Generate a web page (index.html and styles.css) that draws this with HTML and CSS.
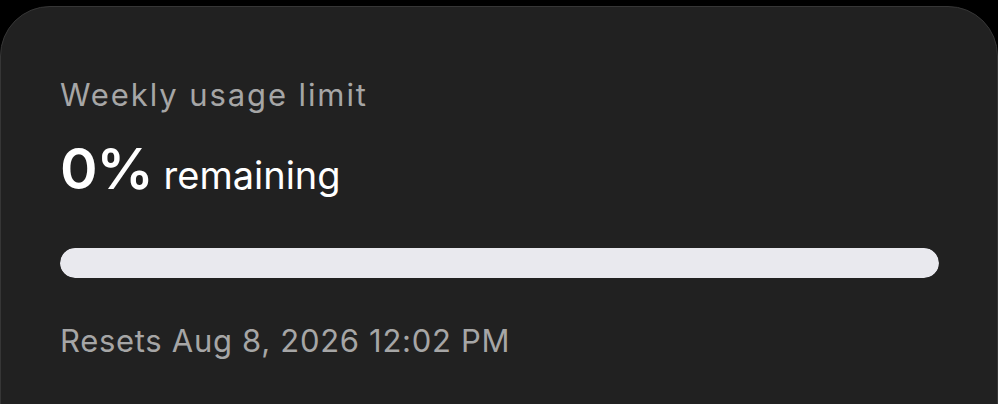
FILE: index.html
```html
<!DOCTYPE html>
<html lang="en">
  <head>
    <meta charset="UTF-8" />
    <meta name="viewport" content="width=device-width, initial-scale=1.0" />
    <title>Usage</title>
    <link rel="stylesheet" href="styles.css">
  </head>
  <body>
    <section class="card">
      <h3 class="label">Weekly usage limit</h3>
      <p class="amount"><strong>0%</strong> remaining</p>
      <div class="bar"><div class="fill" style="width: 100%"></div></div>
      <p class="reset">Resets Aug 8, 2026 12:02 PM</p>
    </section>
  </body>
</html>
```

FILE: styles.css
```css
html,
body {
  margin: 0;
  height: 100%;
  background-color: #000;
  overflow: hidden;
}

body {
  font-family: Inter, "Noto Sans", sans-serif;
  padding-top: 6px;
}

.card {
  box-sizing: border-box;
  height: 440px;
  background-color: #212121;
  border: 1px solid #363636;
  border-radius: 50px 50px 0 0;
  padding: 70px 58px 0 59px;
}

.label {
  margin: 0;
  font-size: 31px;
  font-weight: 400;
  line-height: 36px;
  letter-spacing: 1.9px;
  color: #a6a6a6;
}

.amount {
  margin: 26px 0 0;
  font-size: 38px;
  line-height: 60px;
  color: #fff;
}

.amount strong {
  font-size: 57px;
  font-weight: 600;
  letter-spacing: -1px;
}

.bar {
  margin-top: 43px;
  height: 30px;
  border-radius: 15px;
  background-color: #3a3a3c;
  overflow: hidden;
}

.fill {
  height: 100%;
  border-radius: 15px;
  background-color: #e9e9ee;
}

.reset {
  margin: 45px 0 0;
  font-size: 31px;
  line-height: 36px;
  letter-spacing: 0.7px;
  color: #a6a6a6;
}
```
